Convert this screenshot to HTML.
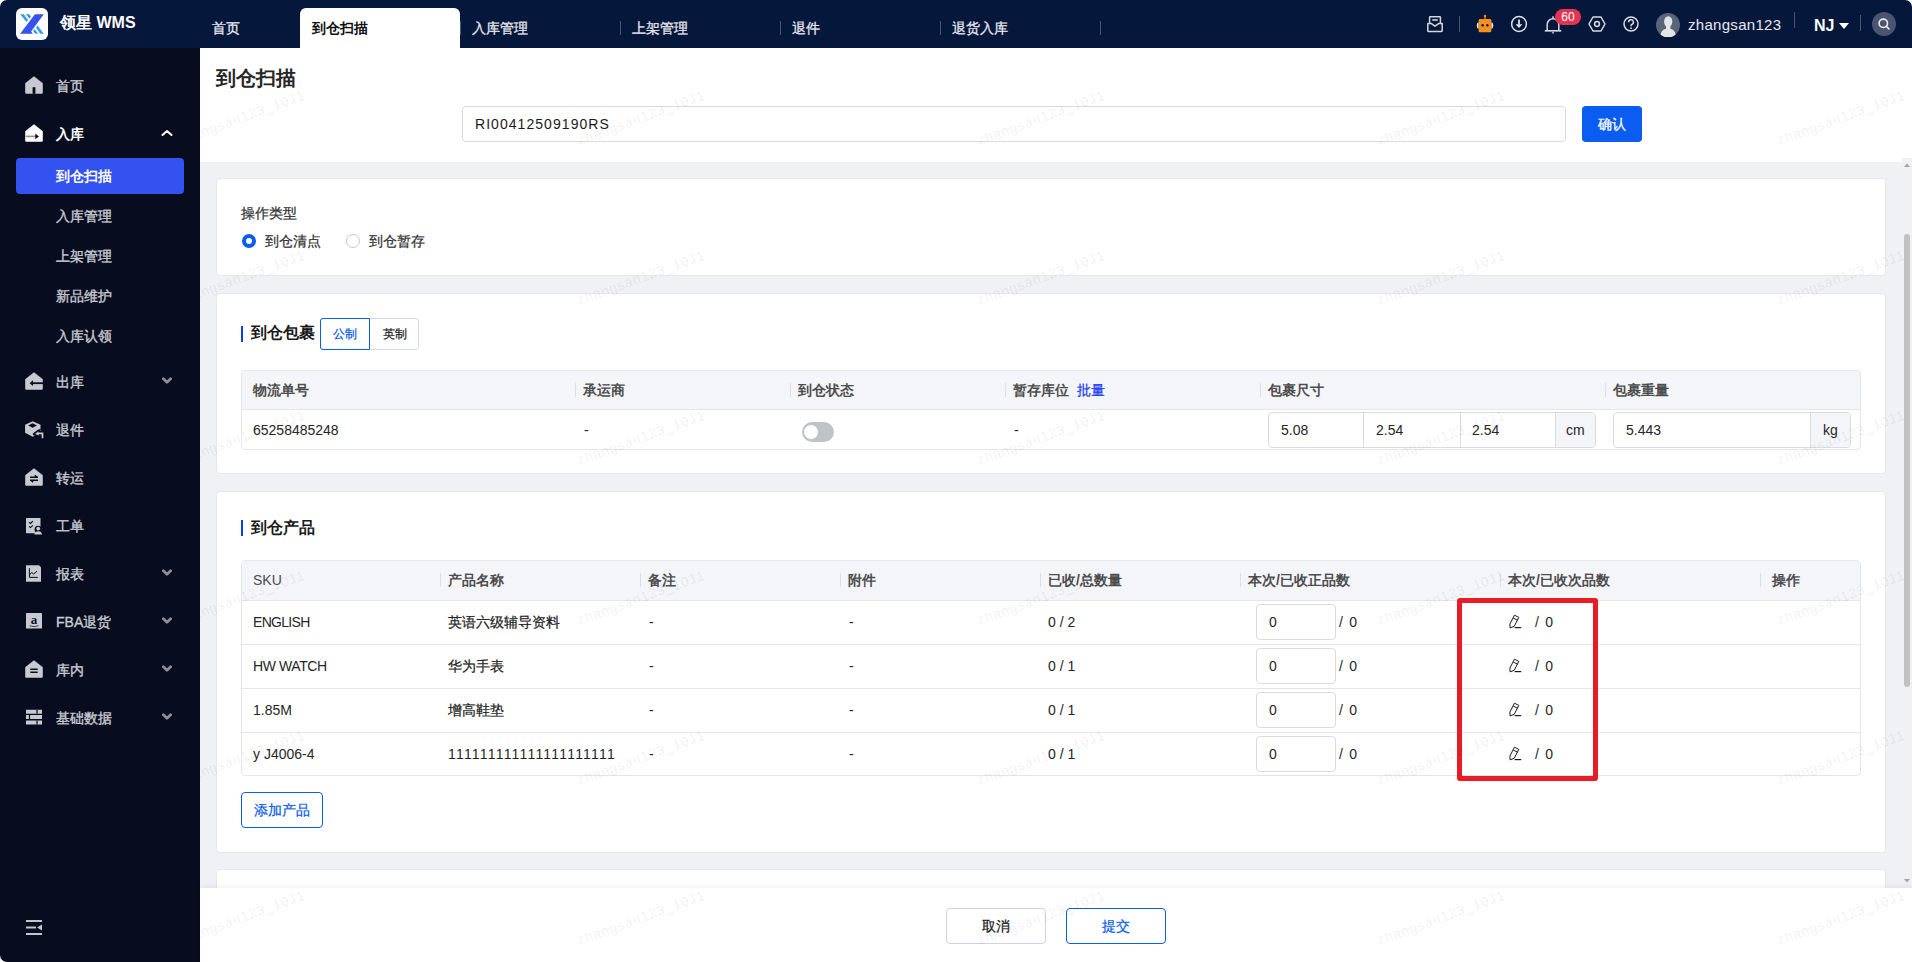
<!DOCTYPE html>
<html><head><meta charset="utf-8">
<style>
*{box-sizing:border-box;margin:0;padding:0}
html,body{width:1912px;height:962px;overflow:hidden;background:#fff}
body{font-family:"Liberation Sans",sans-serif;font-size:14px;color:#262626;position:relative}
.abs{position:absolute}
#app{position:absolute;left:0;top:0;width:1912px;height:962px;border-radius:7px;overflow:hidden;background:#fff}
#hdr{position:absolute;left:0;top:0;width:1912px;height:48px;background:#06173c}
#side{position:absolute;left:0;top:48px;width:200px;height:914px;background:#070d1f}
#main{position:absolute;left:200px;top:48px;width:1712px;height:914px;background:#fff}
.tab{position:absolute;top:8px;height:40px;line-height:40px;color:#e6e8ee;font-size:14px;-webkit-text-stroke:0.3px #e6e8ee}
.tab.act{background:#fff;color:#111;font-weight:bold;-webkit-text-stroke:0;border-radius:6px 6px 0 0}
.tsep{position:absolute;top:21px;width:1px;height:14px;background:#4a5670}
.hsep{position:absolute;width:1px;background:#4a5670}
.si{position:absolute;left:56px;color:#c9ccd3;font-size:14px;line-height:20px;-webkit-text-stroke:0.35px #c9ccd3;margin-top:1px}
.sib{color:#fff;font-weight:bold;-webkit-text-stroke:0}
.sicon{position:absolute;left:25px}
.chev{position:absolute;left:161px}
.card{position:absolute;left:16px;width:1670px;background:#fff;border:1px solid #e6e8ee;border-radius:4px}
.tbl{position:absolute;border:1px solid #e4e6eb;border-radius:4px;background:#fff}
.th{position:absolute;font-weight:bold;color:#4d4d4d;font-size:14px;line-height:20px}
.td{position:absolute;color:#262626;font-size:14px;line-height:20px}
.csep{position:absolute;width:1px;height:14px;background:#dcdfe6}
.wm{font-size:14px;letter-spacing:0.8px;line-height:14px;color:rgba(0,0,0,0.07);white-space:nowrap;transform-origin:0 100%;transform:translateY(-14px) rotate(-20deg)}
.cj{-webkit-text-stroke:0.25px currentColor}
.inp{position:absolute;border:1px solid #d9dbe0;border-radius:4px;background:#fff}
</style></head><body>
<div id="app">
<div id="hdr">
<svg class="abs" style="left:16px;top:8px" width="32" height="32" viewBox="0 0 32 32">
<rect x="0" y="0" width="32" height="32" rx="6" fill="#fff"/>
<polygon points="18.96,6.15 27.8,6.15 15.1,23.45 16.8,25.8 4.16,25.8" fill="#3452f0"/>
<polygon points="4.16,6.15 7.8,6.15 12,12.3 10.5,14.1" fill="#339bf7"/>
<polygon points="9.8,6.15 13.1,6.15 15,8.5 13.5,10.8" fill="#339bf7"/>
<polygon points="17.1,23.3 18.6,21.1 22.1,25.8 19.3,25.8" fill="#339bf7"/>
<polygon points="20,19.6 21.5,17.6 27.8,25.8 24.1,25.8" fill="#339bf7"/>
</svg>
<div class="abs" style="left:60px;top:13px;font-size:16px;line-height:20px;font-weight:bold;color:#fff">领星 WMS</div>
<div class="tab" style="left:212px">首页</div>
<div class="tab act" style="left:300px;width:160px;padding-left:12px">到仓扫描</div>
<div class="tab" style="left:472px">入库管理</div>
<div class="tab" style="left:632px">上架管理</div>
<div class="tab" style="left:792px">退件</div>
<div class="tab" style="left:952px">退货入库</div>
<div class="tsep" style="left:460px"></div>
<div class="tsep" style="left:620px"></div>
<div class="tsep" style="left:780px"></div>
<div class="tsep" style="left:940px"></div>
<div class="tsep" style="left:1100px"></div>
<!-- inbox -->
<svg class="abs" style="left:1426px;top:15px" width="18" height="18" viewBox="0 0 18 18" fill="none" stroke="#d4d6dc" stroke-width="1.5">
<path d="M3.6 8.6V2.4a.6.6 0 0 1 .6-.6h9.6a.6.6 0 0 1 .6.6V8.6"/><path d="M1.8 8.6h3.6l3.6 2.6 3.6-2.6h3.6v7.2a.6.6 0 0 1-.6.6H2.4a.6.6 0 0 1-.6-.6z" stroke-linejoin="round"/><path d="M6.3 5h5.4" stroke-width="1.6"/>
</svg>
<div class="hsep" style="left:1459px;top:16px;height:16px"></div>
<!-- robot -->
<svg class="abs" style="left:1475px;top:14px" width="20" height="20" viewBox="0 0 20 20">
<path d="M3.7 7.9a2.6 3.6 0 0 0 0 7z" fill="#e9eaee"/>
<path d="M16.3 7.9a2.6 3.6 0 0 1 0 7z" fill="#e9eaee"/>
<rect x="3.7" y="5" width="12.6" height="13.2" rx="1.2" fill="#f5901c"/>
<rect x="9.4" y="2.2" width="1.2" height="3" fill="#f5901c"/>
<circle cx="10" cy="2" r="1.2" fill="#f5901c"/>
<circle cx="7.6" cy="11.3" r="1.2" fill="#0a1a3d"/><circle cx="12.4" cy="11.3" r="1.2" fill="#0a1a3d"/>
</svg>
<!-- download -->
<svg class="abs" style="left:1510px;top:15px" width="18" height="18" viewBox="0 0 18 18" fill="none" stroke="#dfe1e6" stroke-width="1.5">
<circle cx="9" cy="9" r="7.4"/><path d="M9 4.6v5" stroke-width="1.8"/><path d="M5.6 9.2h6.8L9 13z" fill="#dfe1e6" stroke="none"/>
</svg>
<!-- bell -->
<svg class="abs" style="left:1543px;top:15px" width="20" height="20" viewBox="0 0 20 20" fill="none" stroke="#d4d6dc" stroke-width="1.5">
<path d="M4.2 15.5V9.5a5.8 5.8 0 0 1 11.6 0v6" /><path d="M1.8 15.8h16.4" stroke-width="1.7"/><path d="M8.6 17.3l1.4 1.6 1.4-1.6z" fill="#d4d6dc" stroke="none"/><path d="M10 1.2v2.2" />
</svg>
<div class="abs" style="left:1555px;top:9px;width:26px;height:16px;border-radius:8px;background:#e33550;color:#fff;font-size:12px;line-height:16px;text-align:center">60</div>
<!-- settings hex -->
<svg class="abs" style="left:1588px;top:16px" width="18" height="16" viewBox="0 0 18 16" fill="none" stroke="#d9dbe0" stroke-width="1.5">
<path d="M5 1h8l4 7-4 7H5L1 8z" stroke-linejoin="round"/><circle cx="9" cy="8" r="2.4"/>
</svg>
<!-- help -->
<svg class="abs" style="left:1622px;top:16px" width="18" height="16" viewBox="0 0 18 16" fill="none" stroke="#d9dbe0" stroke-width="1.5">
<circle cx="9" cy="8" r="7"/><path d="M6.6 6.3a2.4 2.4 0 1 1 3.2 2.2c-.6.3-.8.7-.8 1.4v.4"/><circle cx="9" cy="12.2" r=".9" fill="#d9dbe0" stroke="none"/>
</svg>
<!-- avatar -->
<svg class="abs" style="left:1656px;top:13px" width="24" height="24" viewBox="0 0 24 24">
<circle cx="12" cy="12" r="12" fill="#5b6479"/>
<ellipse cx="12.2" cy="8.6" rx="4.1" ry="5.4" fill="#e3e4e8"/><path d="M4.6 21.8C5.2 17.6 8.2 15.6 12.2 15.6S19 17.6 19.6 21.8A12 12 0 0 1 4.6 21.8z" fill="#e3e4e8"/><path d="M10 12.5h4.4v3.8h-4.4z" fill="#e3e4e8"/></svg>
<div class="abs" style="left:1688px;top:16px;font-size:15px;line-height:18px;color:#e6e8ee;letter-spacing:0.3px">zhangsan123</div>
<div class="hsep" style="left:1794px;top:12px;height:16px"></div>
<div class="abs" style="left:1814px;top:17px;font-size:16px;line-height:18px;font-weight:bold;color:#fff">NJ</div>
<svg class="abs" style="left:1839px;top:23px" width="10" height="6" viewBox="0 0 10 6"><path d="M0 0h10L5 6z" fill="#fff"/></svg>
<div class="hsep" style="left:1860px;top:15px;height:16px"></div>
<svg class="abs" style="left:1872px;top:12px" width="24" height="24" viewBox="0 0 24 24">
<circle cx="12" cy="12" r="12" fill="#4b5570"/>
<circle cx="11.3" cy="11.3" r="4.2" fill="none" stroke="#eceef2" stroke-width="1.6"/><path d="M14.4 14.4l2.6 2.6" stroke="#eceef2" stroke-width="1.6" stroke-linecap="round"/>
</svg>
</div>
<div id="side">
<!-- home -->
<svg class="sicon" style="top:28px" width="18" height="18" viewBox="0 0 18 18"><path d="M9 0.3L17.8 7.2V16.8a1 1 0 0 1-1 1H1.2a1 1 0 0 1-1-1V7.2z" fill="#c8cad1"/><rect x="7.6" y="11.2" width="2.8" height="6.6" fill="#070d1f"/></svg>
<div class="si" style="top:28px;margin-top:0">首页</div>
<!-- inbound -->
<svg class="sicon" style="top:76px" width="18" height="18" viewBox="0 0 18 18"><path d="M9 0.3L17.8 7.2V16.8a1 1 0 0 1-1 1H1.2a1 1 0 0 1-1-1V7.2z" fill="#fff"/><rect x="0.8" y="11.6" width="10" height="1.6" fill="#8e929c"/><path d="M10.3 9.6l3.6 2.8-3.6 2.8z" fill="#070d1f"/></svg>
<div class="si sib" style="top:76px;margin-top:0">入库</div>
<svg class="chev" style="top:81px" width="12" height="8" viewBox="0 0 12 8"><path d="M1.5 6L6 2l4.5 4" fill="none" stroke="#fff" stroke-width="2" stroke-linecap="round" stroke-linejoin="round"/></svg>
<div class="abs" style="left:16px;top:110px;width:168px;height:36px;background:#3452f0;border-radius:4px"></div>
<div class="si sib" style="top:118px;margin-top:0">到仓扫描</div>
<div class="si" style="top:158px;margin-top:0">入库管理</div>
<div class="si" style="top:198px;margin-top:0">上架管理</div>
<div class="si" style="top:238px;margin-top:0">新品维护</div>
<div class="si" style="top:278px;margin-top:0">入库认领</div>
<!-- outbound -->
<svg class="sicon" style="top:324px" width="18" height="18" viewBox="0 0 18 18"><path d="M9 0.3L17.8 7.2V16.8a1 1 0 0 1-1 1H1.2a1 1 0 0 1-1-1V7.2z" fill="#c8cad1"/><rect x="6" y="10.3" width="12" height="1.8" fill="#070d1f"/><path d="M8 8.3l-3.4 2.9L8 14z" fill="#070d1f"/></svg>
<div class="si" style="top:323px">出库</div>
<svg class="chev" style="top:328px" width="12" height="8" viewBox="0 0 12 8"><path d="M2.4 2.8L6 6.2l3.6-3.4" fill="none" stroke="#8a8f9b" stroke-width="2.8" stroke-linecap="round" stroke-linejoin="round"/></svg>
<!-- return -->
<svg class="sicon" style="top:372px;overflow:visible" width="18" height="18" viewBox="0 0 18 18"><path d="M7.7 1.2L15.5 4.7V12.7L7.7 16.7 0.1 12.7V4.7z" fill="#c8cad1"/><path d="M3.2 5.5L7.6 3.2 12 5.5 7.6 7.7z" fill="#070d1f"/><path d="M9 14.2L13.6 10.8 14 16z" fill="#070d1f" stroke="#070d1f" stroke-width="2.4" stroke-linejoin="round"/><path d="M12.6 13.1H17.7V19" fill="none" stroke="#070d1f" stroke-width="4"/><path d="M15.6 9.3L9.8 13.6" stroke="#070d1f" stroke-width="1.4"/><path d="M10 14L13.4 11.6 13.7 15.4z" fill="#c8cad1"/><path d="M12.8 13.3H17.5V18.3" fill="none" stroke="#c8cad1" stroke-width="1.7"/></svg>
<div class="si" style="top:371px">退件</div>
<!-- transfer -->
<svg class="sicon" style="top:420px" width="18" height="18" viewBox="0 0 18 18"><path d="M9 0.3L17.8 7.2V16.8a1 1 0 0 1-1 1H1.2a1 1 0 0 1-1-1V7.2z" fill="#c8cad1"/><path d="M5 9.2h8M9.8 7.4l2.4 1.8M13 12.3H5M8.2 14.1l-2.4-1.8" stroke="#070d1f" stroke-width="1.4" fill="none"/></svg>
<div class="si" style="top:419px">转运</div>
<!-- workorder -->
<svg class="sicon" style="top:469px;overflow:visible" width="18" height="18" viewBox="0 0 18 18"><rect x="1" y="1" width="14.5" height="15.2" rx="0.6" fill="#c8cad1"/><path d="M4 5.2l1.5 1.3 2.4-2.3M4 9.3l1.5 1.3 2.4-2.3" stroke="#070d1f" stroke-width="1.1" fill="none"/><circle cx="13.2" cy="12.4" r="3.6" fill="#070d1f"/><circle cx="13.2" cy="11.6" r="1.9" fill="#c8cad1"/><path d="M9.3 17.6c.4-2.2 2-3.3 3.9-3.3s3.5 1.1 3.9 3.3z" fill="#c8cad1"/></svg>
<div class="si" style="top:467px">工单</div>
<!-- report -->
<svg class="sicon" style="top:516px" width="18" height="18" viewBox="0 0 18 18"><path d="M1 1.2h13l2 2v14.6H1z" fill="#c8cad1"/><path d="M4.4 4.2v9.2h8.4M4.4 10.8l2.4-2.2 1.8 1.4 3.4-2.8" stroke="#070d1f" stroke-width="1" fill="none"/></svg>
<div class="si" style="top:515px">报表</div>
<svg class="chev" style="top:520px" width="12" height="8" viewBox="0 0 12 8"><path d="M2.4 2.8L6 6.2l3.6-3.4" fill="none" stroke="#8a8f9b" stroke-width="2.8" stroke-linecap="round" stroke-linejoin="round"/></svg>
<!-- fba -->
<svg class="sicon" style="top:564px" width="18" height="18" viewBox="0 0 18 18"><rect x="1" y="1" width="16" height="15.5" rx="0.6" fill="#c8cad1"/><text x="9" y="12" text-anchor="middle" font-family="Liberation Serif" font-size="13" font-weight="bold" fill="#070d1f">a</text><path d="M4.5 13.8q4.5 1.6 9 0" stroke="#070d1f" stroke-width=".7" fill="none"/></svg>
<div class="si" style="top:563px">FBA退货</div>
<svg class="chev" style="top:568px" width="12" height="8" viewBox="0 0 12 8"><path d="M2.4 2.8L6 6.2l3.6-3.4" fill="none" stroke="#8a8f9b" stroke-width="2.8" stroke-linecap="round" stroke-linejoin="round"/></svg>
<!-- internal -->
<svg class="sicon" style="top:612px" width="18" height="18" viewBox="0 0 18 18"><path d="M9 0.3L17.8 7.2V16.8a1 1 0 0 1-1 1H1.2a1 1 0 0 1-1-1V7.2z" fill="#c8cad1"/><path d="M5.3 9.2h7.4M5.3 12.2h7.4" stroke="#070d1f" stroke-width="1.4"/></svg>
<div class="si" style="top:611px">库内</div>
<svg class="chev" style="top:616px" width="12" height="8" viewBox="0 0 12 8"><path d="M2.4 2.8L6 6.2l3.6-3.4" fill="none" stroke="#8a8f9b" stroke-width="2.8" stroke-linecap="round" stroke-linejoin="round"/></svg>
<!-- basic data -->
<svg class="sicon" style="top:660px" width="18" height="18" viewBox="0 0 18 18"><path d="M1 1.8h16v4H1zM1 7.1h16v4H1zM1 12.4h16v4H1z" fill="#c8cad1"/><path d="M12 1.8v4M4.5 7.1v4M12 12.4v4" stroke="#070d1f" stroke-width="1.2"/></svg>
<div class="si" style="top:659px">基础数据</div>
<svg class="chev" style="top:664px" width="12" height="8" viewBox="0 0 12 8"><path d="M2.4 2.8L6 6.2l3.6-3.4" fill="none" stroke="#8a8f9b" stroke-width="2.8" stroke-linecap="round" stroke-linejoin="round"/></svg>
<!-- collapse -->
<svg class="abs" style="left:25px;top:870px" width="18" height="18" viewBox="0 0 18 18"><path d="M1 3h16M1 16h16M1 9.5h10" stroke="#c2c5cd" stroke-width="2.2"/><path d="M17 6.6v5.8l-5-2.9z" fill="#c2c5cd"/></svg>
</div>
<div id="main"></div>
<div class="abs" style="left:200px;top:162px;width:1702px;height:726px;background:#f0f1f5"></div>
<div class="abs" style="left:1902px;top:158px;width:10px;height:730px;background:#f1f1f3"></div>
<svg class="abs" style="left:1902px;top:160px" width="10" height="10" viewBox="0 0 10 10"><path d="M2 7h6L5 3.5z" fill="#a3a3a3"/></svg>
<div class="abs" style="left:1904px;top:234px;width:6px;height:453px;background:#c1c1c1;border-radius:3px"></div>
<svg class="abs" style="left:1902px;top:876px" width="10" height="10" viewBox="0 0 10 10"><path d="M2 3h6L5 6.5z" fill="#a3a3a3"/></svg>
<!-- title -->
<div class="abs" style="left:216px;top:64px;font-size:20px;line-height:28px;font-weight:bold;color:#262626">到仓扫描</div>
<div class="inp" style="left:462px;top:106px;width:1104px;height:36px"></div>
<div class="abs" style="left:475px;top:114px;font-size:14px;line-height:20px;color:#1a1a1a;letter-spacing:1.05px">RI00412509190RS</div>
<div class="abs cj" style="left:1582px;top:106px;width:60px;height:36px;background:#0b5cf0;border-radius:4px;color:#fff;font-size:14px;line-height:36px;text-align:center">确认</div>
<!-- card1 -->
<div class="card" style="left:216px;top:178px;height:98px"></div>
<div class="abs cj" style="left:241px;top:203px;font-size:14px;line-height:20px;color:#333">操作类型</div>
<div class="abs" style="left:242px;top:234px;width:14px;height:14px;border-radius:50%;border:4px solid #0b5cf0;background:#fff"></div>
<div class="abs cj" style="left:265px;top:231px;font-size:14px;line-height:20px;color:#333">到仓清点</div>
<div class="abs" style="left:346px;top:234px;width:14px;height:14px;border-radius:50%;border:1px solid #c4c7ce;background:#fff"></div>
<div class="abs cj" style="left:369px;top:231px;font-size:14px;line-height:20px;color:#333">到仓暂存</div>
<!-- card2 -->
<div class="card" style="left:216px;top:293px;height:181px"></div>
<div class="abs" style="left:241px;top:326px;width:2px;height:16px;background:#0b3cf0"></div>
<div class="abs" style="left:251px;top:322px;font-size:16px;line-height:22px;font-weight:bold;color:#1a1a1a">到仓包裹</div>
<div class="abs" style="left:320px;top:318px;width:99px;height:32px;border:1px solid #d6d9df;border-radius:3px"></div>
<div class="abs cj" style="left:320px;top:318px;width:50px;height:32px;border:1px solid #0b5cf0;border-radius:3px 0 0 3px;color:#0b5cf0;font-size:12px;line-height:30px;text-align:center">公制</div>
<div class="abs cj" style="left:370px;top:318px;width:49px;height:32px;color:#262626;font-size:12px;line-height:32px;text-align:center">英制</div>
<div class="tbl" style="left:241px;top:370px;width:1620px;height:80px;overflow:hidden">
 <div class="abs" style="left:0;top:0;width:1620px;height:39px;background:#f4f5f9;border-bottom:1px solid #e4e6eb"></div>
</div>
<div class="th" style="left:253px;top:380px">物流单号</div>
<div class="csep" style="left:575px;top:383px"></div><div class="th" style="left:583px;top:380px">承运商</div>
<div class="csep" style="left:790px;top:383px"></div><div class="th" style="left:798px;top:380px">到仓状态</div>
<div class="csep" style="left:1005px;top:383px"></div><div class="th" style="left:1013px;top:380px">暂存库位</div>
<div class="abs cj" style="left:1077px;top:380px;font-size:14px;line-height:20px;color:#1a3cf5">批量</div>
<div class="csep" style="left:1260px;top:383px"></div><div class="th" style="left:1268px;top:380px">包裹尺寸</div>
<div class="csep" style="left:1605px;top:383px"></div><div class="th" style="left:1613px;top:380px">包裹重量</div>
<div class="td" style="left:253px;top:420px">65258485248</div>
<div class="td" style="left:584px;top:420px">-</div>
<div class="abs" style="left:802px;top:422px;width:32px;height:20px;border-radius:10px;background:#bfc2c7"></div>
<div class="abs" style="left:804px;top:425px;width:14px;height:14px;border-radius:50%;background:#fff"></div>
<div class="td" style="left:1014px;top:420px">-</div>
<div class="inp" style="left:1268px;top:412px;width:328px;height:36px;overflow:hidden">
 <div class="abs" style="left:286px;top:0;width:41px;height:34px;background:#f4f5f9;border-left:1px solid #d9dbe0"></div>
 <div class="abs" style="left:94px;top:0;width:1px;height:34px;background:#d9dbe0"></div>
 <div class="abs" style="left:191px;top:0;width:1px;height:34px;background:#d9dbe0"></div>
</div>
<div class="td" style="left:1281px;top:420px">5.08</div>
<div class="td" style="left:1376px;top:420px">2.54</div>
<div class="td" style="left:1472px;top:420px">2.54</div>
<div class="td" style="left:1566px;top:420px">cm</div>
<div class="inp" style="left:1613px;top:412px;width:238px;height:36px;overflow:hidden">
 <div class="abs" style="left:196px;top:0;width:41px;height:34px;background:#f4f5f9;border-left:1px solid #d9dbe0"></div>
</div>
<div class="td" style="left:1626px;top:420px">5.443</div>
<div class="td" style="left:1823px;top:420px">kg</div>
<!-- card3 -->
<div class="card" style="left:216px;top:491px;height:362px"></div>
<div class="abs" style="left:241px;top:520px;width:2px;height:16px;background:#0b3cf0"></div>
<div class="abs" style="left:251px;top:517px;font-size:16px;line-height:22px;font-weight:bold;color:#1a1a1a">到仓产品</div>
<div class="tbl" style="left:241px;top:560px;width:1620px;height:216px;overflow:hidden">
 <div class="abs" style="left:0;top:0;width:1620px;height:40px;background:#f4f5f9;border-bottom:1px solid #e4e6eb"></div>
 <div class="abs" style="left:0;top:83px;width:1620px;height:1px;background:#e4e6eb"></div>
 <div class="abs" style="left:0;top:127px;width:1620px;height:1px;background:#e4e6eb"></div>
 <div class="abs" style="left:0;top:171px;width:1620px;height:1px;background:#e4e6eb"></div>
</div>
<div class="th" style="left:253px;top:570px;font-weight:normal">SKU</div>
<div class="csep" style="left:440px;top:573px"></div><div class="th" style="left:448px;top:570px">产品名称</div>
<div class="csep" style="left:640px;top:573px"></div><div class="th" style="left:648px;top:570px">备注</div>
<div class="csep" style="left:840px;top:573px"></div><div class="th" style="left:848px;top:570px">附件</div>
<div class="csep" style="left:1040px;top:573px"></div><div class="th" style="left:1048px;top:570px">已收/总数量</div>
<div class="csep" style="left:1240px;top:573px"></div><div class="th" style="left:1248px;top:570px">本次/已收正品数</div>
<div class="csep" style="left:1500px;top:573px"></div><div class="th" style="left:1508px;top:570px">本次/已收次品数</div>
<div class="csep" style="left:1760px;top:573px"></div><div class="th" style="left:1772px;top:570px">操作</div>
<div class="td" style="left:253px;top:612px;letter-spacing:-0.7px">ENGLISH</div><div class="td cj" style="left:448px;top:612px">英语六级辅导资料</div><div class="td" style="left:649px;top:612px">-</div><div class="td" style="left:849px;top:612px">-</div><div class="td" style="left:1048px;top:612px">0 / 2</div><div class="inp" style="left:1256px;top:604px;width:80px;height:36px"></div><div class="td" style="left:1269px;top:612px">0</div><div class="td" style="left:1339px;top:612px;letter-spacing:1.2px">/ 0</div><svg class="abs" style="left:1508px;top:613px" width="16" height="16" viewBox="0 0 16 16" fill="none" stroke="#1a1a1a" stroke-width="1" stroke-linejoin="round"><path d="M6.4 2.2L10.8 4.4 6.2 13.3 2.1 14.9 1.9 11.1z"/><path d="M5.3 5.1L9.8 7.3"/><path d="M6.6 14.6h6.6" stroke-width="1.2"/></svg><div class="td" style="left:1535px;top:612px;letter-spacing:1.2px">/ 0</div>
<div class="td" style="left:253px;top:656px;letter-spacing:-0.4px">HW WATCH</div><div class="td cj" style="left:448px;top:656px">华为手表</div><div class="td" style="left:649px;top:656px">-</div><div class="td" style="left:849px;top:656px">-</div><div class="td" style="left:1048px;top:656px">0 / 1</div><div class="inp" style="left:1256px;top:648px;width:80px;height:36px"></div><div class="td" style="left:1269px;top:656px">0</div><div class="td" style="left:1339px;top:656px;letter-spacing:1.2px">/ 0</div><svg class="abs" style="left:1508px;top:657px" width="16" height="16" viewBox="0 0 16 16" fill="none" stroke="#1a1a1a" stroke-width="1" stroke-linejoin="round"><path d="M6.4 2.2L10.8 4.4 6.2 13.3 2.1 14.9 1.9 11.1z"/><path d="M5.3 5.1L9.8 7.3"/><path d="M6.6 14.6h6.6" stroke-width="1.2"/></svg><div class="td" style="left:1535px;top:656px;letter-spacing:1.2px">/ 0</div>
<div class="td" style="left:253px;top:700px">1.85M</div><div class="td cj" style="left:448px;top:700px">增高鞋垫</div><div class="td" style="left:649px;top:700px">-</div><div class="td" style="left:849px;top:700px">-</div><div class="td" style="left:1048px;top:700px">0 / 1</div><div class="inp" style="left:1256px;top:692px;width:80px;height:36px"></div><div class="td" style="left:1269px;top:700px">0</div><div class="td" style="left:1339px;top:700px;letter-spacing:1.2px">/ 0</div><svg class="abs" style="left:1508px;top:701px" width="16" height="16" viewBox="0 0 16 16" fill="none" stroke="#1a1a1a" stroke-width="1" stroke-linejoin="round"><path d="M6.4 2.2L10.8 4.4 6.2 13.3 2.1 14.9 1.9 11.1z"/><path d="M5.3 5.1L9.8 7.3"/><path d="M6.6 14.6h6.6" stroke-width="1.2"/></svg><div class="td" style="left:1535px;top:700px;letter-spacing:1.2px">/ 0</div>
<div class="td" style="left:253px;top:744px">y J4006-4</div><div class="td" style="left:448px;top:744px;letter-spacing:1.2px">111111111111111111111</div><div class="td" style="left:649px;top:744px">-</div><div class="td" style="left:849px;top:744px">-</div><div class="td" style="left:1048px;top:744px">0 / 1</div><div class="inp" style="left:1256px;top:736px;width:80px;height:36px"></div><div class="td" style="left:1269px;top:744px">0</div><div class="td" style="left:1339px;top:744px;letter-spacing:1.2px">/ 0</div><svg class="abs" style="left:1508px;top:745px" width="16" height="16" viewBox="0 0 16 16" fill="none" stroke="#1a1a1a" stroke-width="1" stroke-linejoin="round"><path d="M6.4 2.2L10.8 4.4 6.2 13.3 2.1 14.9 1.9 11.1z"/><path d="M5.3 5.1L9.8 7.3"/><path d="M6.6 14.6h6.6" stroke-width="1.2"/></svg><div class="td" style="left:1535px;top:744px;letter-spacing:1.2px">/ 0</div>

<div class="abs cj" style="left:241px;top:792px;width:82px;height:36px;border:1px solid #0b5cf0;border-radius:4px;color:#0b5cf0;font-size:14px;line-height:34px;text-align:center">添加产品</div>
<div class="abs" style="left:1457px;top:598px;width:141px;height:183px;border:5.7px solid #e81c24;border-radius:3px"></div>
<!-- card4 -->
<div class="card" style="left:216px;top:869px;height:60px"></div>
<!-- footer -->
<div class="abs" style="left:200px;top:888px;width:1712px;height:74px;background:#fff;box-shadow:0 -2px 6px rgba(0,0,0,0.06)"></div>
<div class="abs cj" style="left:946px;top:908px;width:100px;height:36px;border:1px solid #d0d3d9;border-radius:4px;color:#1a1a1a;font-size:14px;line-height:34px;text-align:center">取消</div>
<div class="abs cj" style="left:1066px;top:908px;width:100px;height:36px;border:1px solid #0b5cf0;border-radius:4px;color:#0b5cf0;font-size:14px;line-height:34px;text-align:center">提交</div>

<div class="abs" style="left:200px;top:48px;width:1712px;height:914px;overflow:hidden;pointer-events:none"><div class="abs wm" style="left:-20px;top:-61px">zhangsan123_1011</div><div class="abs wm" style="left:380px;top:-61px">zhangsan123_1011</div><div class="abs wm" style="left:780px;top:-61px">zhangsan123_1011</div><div class="abs wm" style="left:1180px;top:-61px">zhangsan123_1011</div><div class="abs wm" style="left:1580px;top:-61px">zhangsan123_1011</div><div class="abs wm" style="left:-20px;top:99px">zhangsan123_1011</div><div class="abs wm" style="left:380px;top:99px">zhangsan123_1011</div><div class="abs wm" style="left:780px;top:99px">zhangsan123_1011</div><div class="abs wm" style="left:1180px;top:99px">zhangsan123_1011</div><div class="abs wm" style="left:1580px;top:99px">zhangsan123_1011</div><div class="abs wm" style="left:-20px;top:259px">zhangsan123_1011</div><div class="abs wm" style="left:380px;top:259px">zhangsan123_1011</div><div class="abs wm" style="left:780px;top:259px">zhangsan123_1011</div><div class="abs wm" style="left:1180px;top:259px">zhangsan123_1011</div><div class="abs wm" style="left:1580px;top:259px">zhangsan123_1011</div><div class="abs wm" style="left:-20px;top:419px">zhangsan123_1011</div><div class="abs wm" style="left:380px;top:419px">zhangsan123_1011</div><div class="abs wm" style="left:780px;top:419px">zhangsan123_1011</div><div class="abs wm" style="left:1180px;top:419px">zhangsan123_1011</div><div class="abs wm" style="left:1580px;top:419px">zhangsan123_1011</div><div class="abs wm" style="left:-20px;top:579px">zhangsan123_1011</div><div class="abs wm" style="left:380px;top:579px">zhangsan123_1011</div><div class="abs wm" style="left:780px;top:579px">zhangsan123_1011</div><div class="abs wm" style="left:1180px;top:579px">zhangsan123_1011</div><div class="abs wm" style="left:1580px;top:579px">zhangsan123_1011</div><div class="abs wm" style="left:-20px;top:739px">zhangsan123_1011</div><div class="abs wm" style="left:380px;top:739px">zhangsan123_1011</div><div class="abs wm" style="left:780px;top:739px">zhangsan123_1011</div><div class="abs wm" style="left:1180px;top:739px">zhangsan123_1011</div><div class="abs wm" style="left:1580px;top:739px">zhangsan123_1011</div><div class="abs wm" style="left:-20px;top:899px">zhangsan123_1011</div><div class="abs wm" style="left:380px;top:899px">zhangsan123_1011</div><div class="abs wm" style="left:780px;top:899px">zhangsan123_1011</div><div class="abs wm" style="left:1180px;top:899px">zhangsan123_1011</div><div class="abs wm" style="left:1580px;top:899px">zhangsan123_1011</div></div>
</div>
</body></html>
